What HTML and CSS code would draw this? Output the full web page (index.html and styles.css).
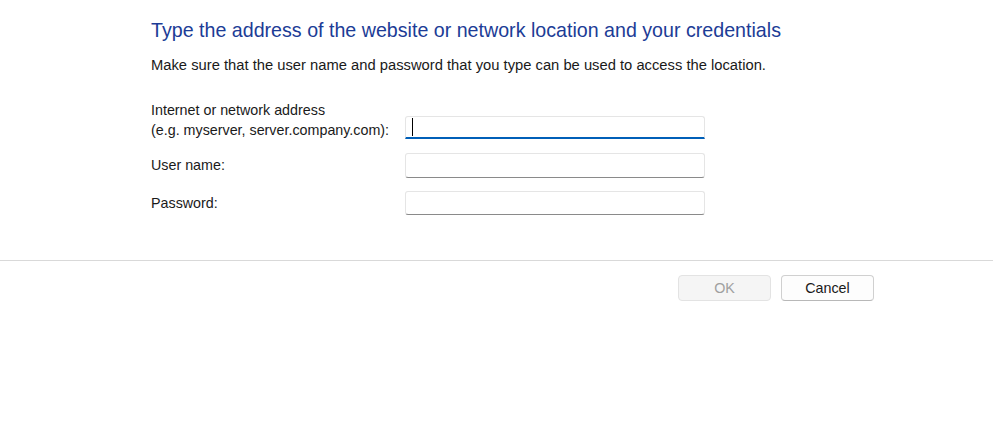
FILE: index.html
```html
<!DOCTYPE html>
<html lang="en">
<head>
<meta charset="utf-8">
<title>Add network location</title>
<link rel="stylesheet" href="styles.css">
</head>
<body>
<div class="dialog">
  <main class="content">
    <h1 class="title">Type the address of the website or network location and your credentials</h1>
    <p class="desc">Make sure that the user name and password that you type can be used to access the location.</p>
    <div class="form">
      <label class="label label-two" for="addr">Internet or network address<br>(e.g. myserver, server.company.com):</label>
      <div class="field"><input id="addr" class="input focused" type="text"><span class="caret"></span></div>
      <label class="label" for="user">User name:</label>
      <div class="field"><input id="user" class="input" type="text"></div>
      <label class="label" for="pass">Password:</label>
      <div class="field field-last"><input id="pass" class="input" type="password"></div>
    </div>
  </main>
  <footer class="footer">
    <button class="btn btn-disabled" type="button" disabled>OK</button>
    <button class="btn" type="button">Cancel</button>
  </footer>
</div>
</body>
</html>
```
FILE: styles.css
```css
html, body {
  margin: 0;
  padding: 0;
  background: #ffffff;
}
body {
  font-family: "Liberation Sans", Arial, sans-serif;
  color: #1a1a1a;
  width: 993px;
  height: 433px;
  overflow: hidden;
}
.content {
  padding: 17px 0 0 151px;
  height: 260px;
  box-sizing: border-box;
}
.title {
  margin: 0;
  font-weight: normal;
  font-size: 19.65px;
  line-height: 27px;
  color: #1c3c96;
}
.desc {
  margin: 11px 0 0 0;
  font-size: 14.75px;
  line-height: 20px;
  color: #1a1a1a;
}
.form {
  margin-top: 25px;
  display: grid;
  grid-template-columns: 254px 300px;
  grid-auto-rows: auto;
  row-gap: 13px;
  align-items: end;
}
.label {
  font-size: 14.3px;
  line-height: 20px;
  color: #1a1a1a;
  padding-bottom: 2px;
}
.label-two {
  padding-bottom: 0;
}
.field {
  position: relative;
  height: 24px;
}
.field-last {
  height: 25px;
}
.input {
  display: block;
  box-sizing: border-box;
  width: 300px;
  height: 25px;
  margin: 0;
  border: 1px solid #e5e5e5;
  border-bottom: 1px solid #8a8a8a;
  border-radius: 3px;
  background: #ffffff;
  outline: none;
  padding: 0 6px;
  font: inherit;
}
.field-last .input {
  margin-top: 1px;
  height: 24px;
}
.input.focused {
  height: 23px;
  border-bottom: 2px solid #005fb8;
  border-radius: 3px 3px 0 0;
}
.caret {
  position: absolute;
  left: 7px;
  top: 2px;
  width: 1px;
  height: 18px;
  background: #000000;
}
.footer {
  border-top: 1px solid #d9d9d9;
  display: flex;
  justify-content: flex-end;
  gap: 10px;
  padding: 14px 119px 0 0;
}
.btn {
  width: 93px;
  height: 26px;
  box-sizing: border-box;
  border: 1px solid #d0d0d0;
  border-bottom-color: #b8b8b8;
  border-radius: 4px;
  background: #fdfdfd;
  font-family: inherit;
  font-size: 14.3px;
  color: #1a1a1a;
  padding: 0;
}
.btn-disabled {
  background: #f5f5f5;
  border-color: #e3e3e3;
  color: #a0a0a0;
}
```
